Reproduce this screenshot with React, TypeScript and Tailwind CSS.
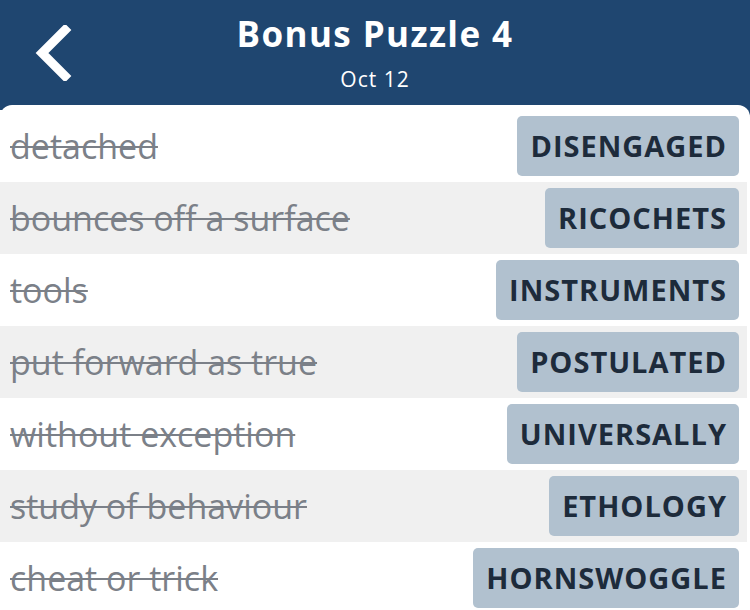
import { useState } from "react";

const answers = [
  { clue: "detached", word: "DISENGAGED" },
  { clue: "bounces off a surface", word: "RICOCHETS" },
  { clue: "tools", word: "INSTRUMENTS" },
  { clue: "put forward as true", word: "POSTULATED" },
  { clue: "without exception", word: "UNIVERSALLY" },
  { clue: "study of behaviour", word: "ETHOLOGY" },
  { clue: "cheat or trick", word: "HORNSWOGGLE" },
];

const App = () => {
  const [solved] = useState(answers);

  return (
    <div className="w-[750px] h-[610px] overflow-hidden bg-[#1f4670] font-['Open_Sans','Lato',sans-serif]">
      {/* Header */}
      <header className="relative h-[105px] flex flex-col items-center text-white">
        <button
          className="absolute left-[32px] top-[25px] w-[40px] h-[56px]"
          aria-label="Back"
        >
          <svg width="40" height="56" viewBox="0 0 40 56" fill="none">
            <polyline
              points="33,5 10,28 33,51"
              stroke="white"
              strokeWidth="9"
              strokeLinecap="square"
              strokeLinejoin="miter"
            />
          </svg>
        </button>
        <h1 className="mt-[14px] text-[35px] leading-[40px] font-bold tracking-[1.4px]">
          Bonus Puzzle 4
        </h1>
        <p className="mt-[12px] text-[21px] leading-[26px] tracking-[1px]">Oct 12</p>
      </header>

      {/* Answer list */}
      <div className="bg-white rounded-t-xl pt-[5px] h-[505px]">
        {solved.map((item, i) => (
          <div
            key={item.word}
            className={`h-[72px] mr-[3px] flex items-center justify-between pl-[10px] pr-[8px] ${
              i % 2 === 1 ? "bg-[#f0f0f0]" : "bg-white"
            }`}
          >
            <span className="text-[34px] text-[#7b8088] line-through decoration-[2px]">
              {item.clue}
            </span>
            <span className="h-[60px] flex items-center pl-[13px] pr-[12px] rounded-[5px] bg-[#b1c1cf] text-[#1d2b3b] text-[29px] font-bold tracking-[1px]">
              {item.word}
            </span>
          </div>
        ))}
      </div>
    </div>
  );
};

export default App;
